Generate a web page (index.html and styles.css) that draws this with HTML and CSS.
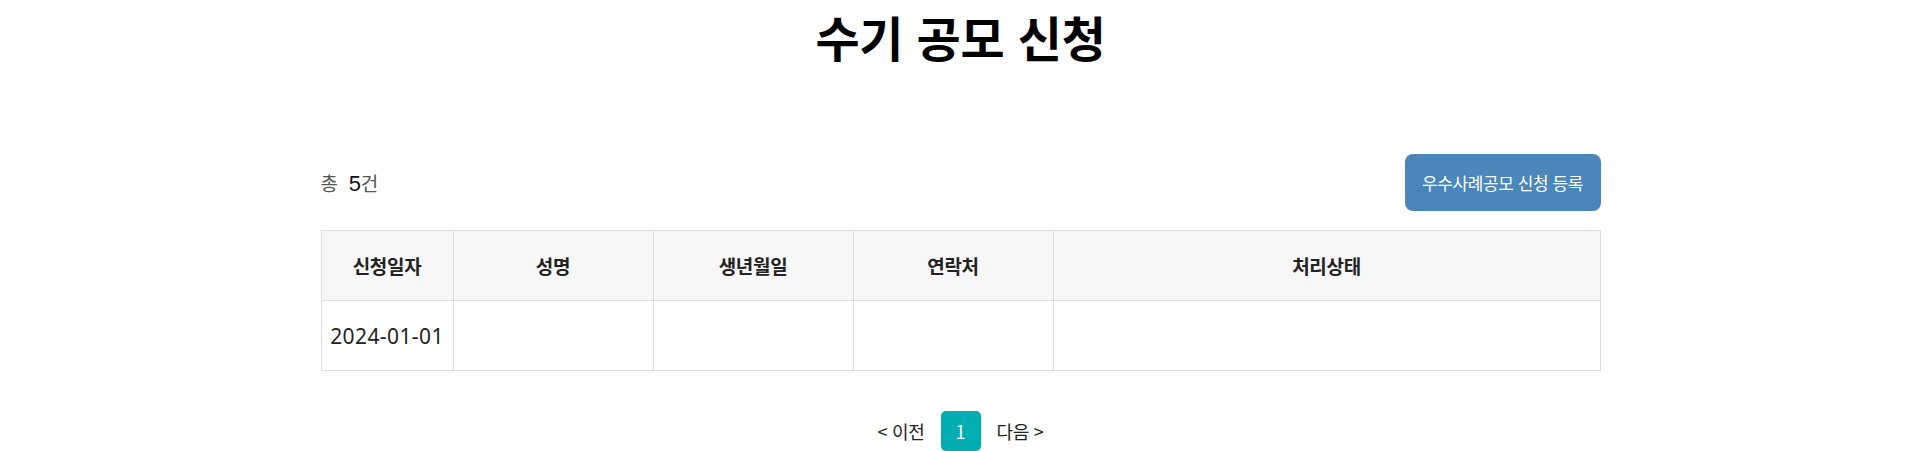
FILE: index.html
```html
<!DOCTYPE html>
<html lang="ko">
<head>
<meta charset="utf-8">
<title>수기 공모 신청</title>
<link rel="stylesheet" href="styles.css">
</head>
<body>
<main class="page">
  <h1 class="title">수기 공모 신청</h1>
  <div class="toolbar">
    <p class="count">총 <strong class="count-num">5</strong>건</p>
    <button class="btn-primary" type="button">우수사례공모 신청 등록</button>
  </div>
  <table class="list">
    <colgroup>
      <col class="c-date">
      <col class="c-name">
      <col class="c-birth">
      <col class="c-phone">
      <col>
    </colgroup>
    <thead>
      <tr>
        <th>신청일자</th>
        <th>성명</th>
        <th>생년월일</th>
        <th>연락처</th>
        <th>처리상태</th>
      </tr>
    </thead>
    <tbody>
      <tr>
        <td class="cell-date">2024-01-01</td>
        <td></td>
        <td></td>
        <td></td>
        <td></td>
      </tr>
    </tbody>
  </table>
  <nav class="pager">
    <a class="pager-link" href="#">&lt; 이전</a>
    <a class="pager-num is-active" href="#">1</a>
    <a class="pager-link" href="#">다음 &gt;</a>
  </nav>
</main>
</body>
</html>
```

FILE: styles.css
```css
html, body {
  margin: 0;
  padding: 0;
  background: #fff;
}
body {
  font-family: "Noto Sans CJK KR", "Noto Sans", sans-serif;
  color: #222;
}
.page {
  width: 1280px;
  margin: 0 auto;
}
.title {
  margin: 0;
  text-align: center;
  font-size: 48px;
  line-height: 73px;
  font-weight: 700;
  letter-spacing: -0.2px;
  color: #000;
}
.toolbar {
  margin-top: 81px;
  display: flex;
  justify-content: space-between;
  align-items: center;
  height: 57px;
}
.count {
  margin: 0;
  font-size: 19px;
  color: #555;
  letter-spacing: -0.3px;
}
.count-num {
  font-family: "Liberation Sans", sans-serif;
  font-weight: 400;
  font-size: 22px;
  color: #111;
  margin-left: 6px;
}
.btn-primary {
  height: 57px;
  width: 196px;
  border: 0;
  border-radius: 8px;
  background: #4b86ba;
  color: #fff;
  font-family: inherit;
  font-size: 17px;
  letter-spacing: -0.4px;
  padding: 0;
}
.list {
  margin-top: 19px;
  width: 1280px;
  border-collapse: collapse;
  table-layout: fixed;
}
.c-date { width: 132px; }
.c-name { width: 200px; }
.c-birth { width: 200px; }
.c-phone { width: 200px; }
.list th,
.list td {
  border: 1px solid #ddd;
  height: 69px;
  padding: 0;
  text-align: center;
  font-size: 19px;
  letter-spacing: -0.3px;
}
.list th {
  background: #f7f7f7;
  font-weight: 700;
  color: #222;
}
.list td {
  font-weight: 400;
  color: #222;
}
.list .cell-date {
  font-family: "Noto Sans", sans-serif;
  font-size: 21px;
  letter-spacing: 0.4px;
}
.pager {
  margin-top: 40px;
  display: flex;
  justify-content: center;
  align-items: center;
  gap: 16px;
}
.pager-link {
  color: #222;
  text-decoration: none;
  font-size: 18px;
  letter-spacing: -0.3px;
}
.pager-num {
  width: 40px;
  height: 40px;
  border-radius: 5px;
  background: #00aeb1;
  color: #fff;
  text-decoration: none;
  display: flex;
  align-items: center;
  justify-content: center;
  font-size: 18px;
}
```
